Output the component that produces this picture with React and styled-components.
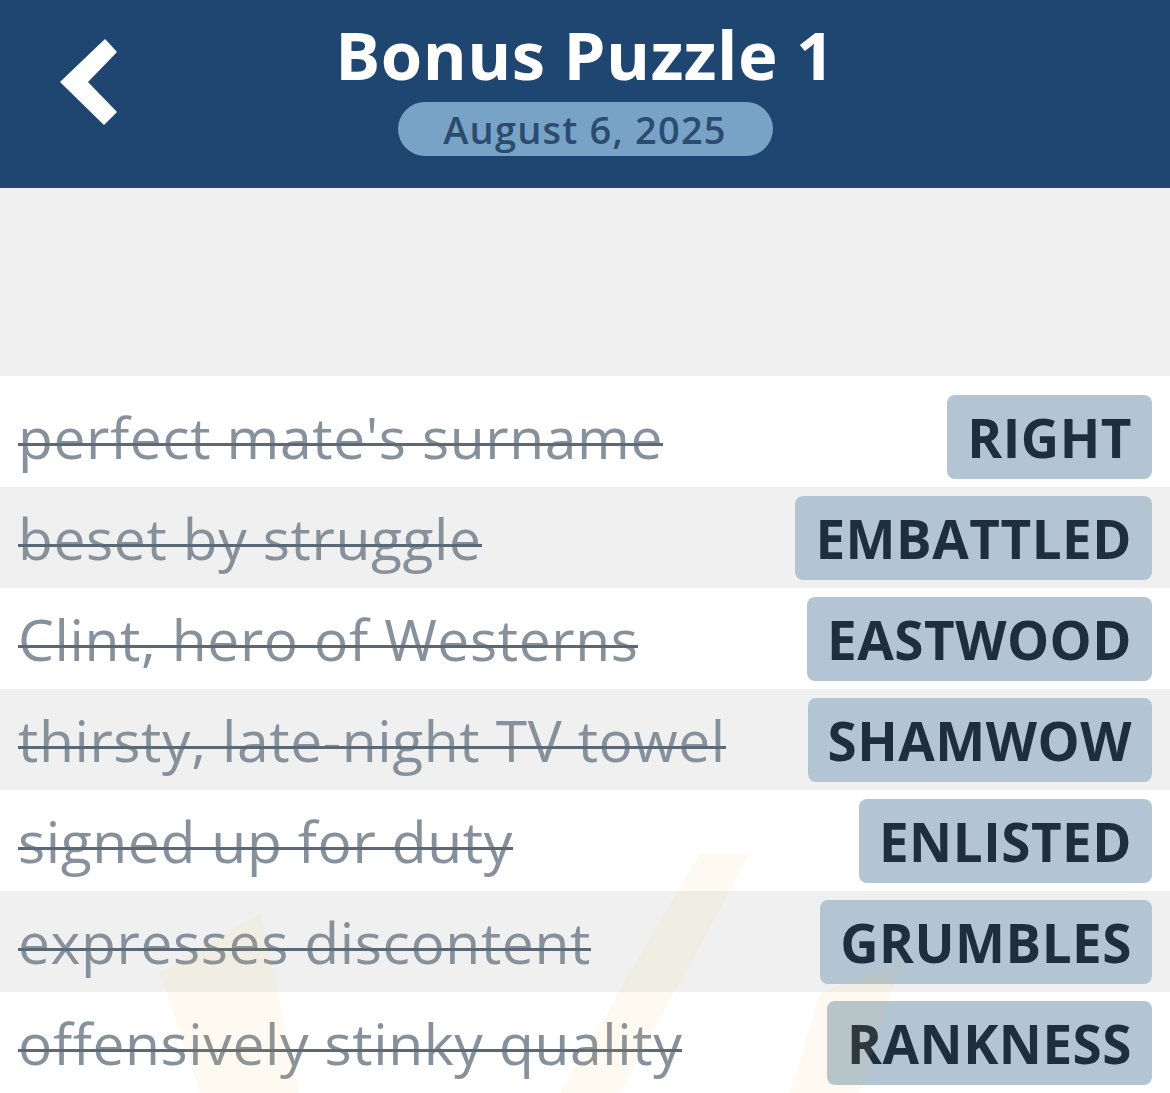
import React from "react";
import styled, { createGlobalStyle } from "styled-components";

const clues = [
  { clue: "perfect mate's surname", answer: "RIGHT" },
  { clue: "beset by struggle", answer: "EMBATTLED" },
  { clue: "Clint, hero of Westerns", answer: "EASTWOOD" },
  { clue: "thirsty, late-night TV towel", answer: "SHAMWOW" },
  { clue: "signed up for duty", answer: "ENLISTED" },
  { clue: "expresses discontent", answer: "GRUMBLES" },
  { clue: "offensively stinky quality", answer: "RANKNESS" }
];

const GlobalStyle = createGlobalStyle`
  html, body {
    margin: 0;
    padding: 0;
    background: #f0f0f0;
  }
  body {
    font-family: "Open Sans", Lato, sans-serif;
  }
`;

class App extends React.Component {
  render() {
    return (
      <Page>
        <GlobalStyle />
        <Header>
          <BackButton aria-label="Back">
            <svg width="60" height="90" viewBox="0 0 60 90">
              <polygon
                points="47,2 58,14 29,44 58,74 46,86 3,44"
                fill="#ffffff"
                strokeLinejoin="round"
                stroke="#ffffff"
                strokeWidth="1.5"
              />
            </svg>
          </BackButton>
          <Title>Bonus Puzzle 1</Title>
          <DatePill>August 6, 2025</DatePill>
        </Header>
        <Spacer />
        <List>
          {clues.map((item, i) => (
            <Row key={item.answer} striped={i % 2 === 1} first={i === 0}>
              <ClueCell>
                <Clue>{item.clue}</Clue>
              </ClueCell>
              <Answer>{item.answer}</Answer>
            </Row>
          ))}
          <Watermark viewBox="0 0 1170 240" preserveAspectRatio="none">
            <polygon points="700,0 750,0 620,240 560,240" fill="#f7c948" />
            <polygon points="160,120 260,60 300,240 200,240" fill="#f7c948" />
            <polygon points="820,140 900,110 860,240 790,240" fill="#f7c948" />
          </Watermark>
        </List>
      </Page>
    );
  }
}

const Page = styled.div`
  width: 1170px;
  min-height: 1093px;
  background: #f0f0f0;
`;

const Header = styled.header`
  position: relative;
  height: 188px;
  background-color: #1f4670;
  display: flex;
  flex-direction: column;
  align-items: center;
  padding-top: 12px;
  box-sizing: border-box;
`;

const BackButton = styled.div`
  position: absolute;
  left: 58px;
  top: 38px;
  width: 60px;
  height: 90px;
`;

const Title = styled.h1`
  margin: 0;
  color: #ffffff;
  font-family: "Open Sans", sans-serif;
  font-weight: 700;
  font-size: 67px;
  letter-spacing: 0.5px;
  line-height: 84px;
`;

const DatePill = styled.div`
  margin-top: 6px;
  width: 375px;
  height: 54px;
  border-radius: 27px;
  background-color: #78a3c6;
  color: #2b4b6f;
  font-family: "Open Sans", sans-serif;
  font-weight: 600;
  font-size: 38px;
  letter-spacing: 1.2px;
  display: flex;
  align-items: center;
  justify-content: center;
`;

const Spacer = styled.div`
  height: 188px;
  background: #f0f0f0;
`;

const List = styled.div`
  position: relative;
  overflow: hidden;
`;

const Row = styled.div`
  box-sizing: border-box;
  padding: ${({ first }) => (first ? "19px" : "9px")} 18px 0 18px;
  height: ${({ first }) => (first ? "111px" : "101px")};
  background-color: ${({ striped }) => (striped ? "#f0f0f0" : "#ffffff")};
  display: flex;
  align-items: flex-start;
  justify-content: space-between;
`;

const ClueCell = styled.div`
  height: 84px;
  display: flex;
  align-items: center;
`;

const Clue = styled.span`
  position: relative;
  font-family: "Open Sans", sans-serif;
  font-size: 57px;
  line-height: 78px;
  letter-spacing: 0.6px;
  color: #87919c;
  white-space: nowrap;

  &::after {
    content: "";
    position: absolute;
    left: 0;
    right: 0;
    top: 45px;
    height: 3px;
    background-color: #5b6977;
  }
`;

const Answer = styled.div`
  height: 84px;
  box-sizing: border-box;
  padding: 0 20px;
  border-radius: 8px;
  background-color: #b3c5d3;
  color: #1e2e3f;
  font-family: "Open Sans", sans-serif;
  font-weight: 700;
  font-size: 53px;
  letter-spacing: 0.5px;
  display: flex;
  align-items: center;
  white-space: nowrap;
`;

const Watermark = styled.svg`
  position: absolute;
  left: 0;
  bottom: 0;
  width: 1170px;
  height: 240px;
  opacity: 0.07;
  pointer-events: none;
`;

export default App;
